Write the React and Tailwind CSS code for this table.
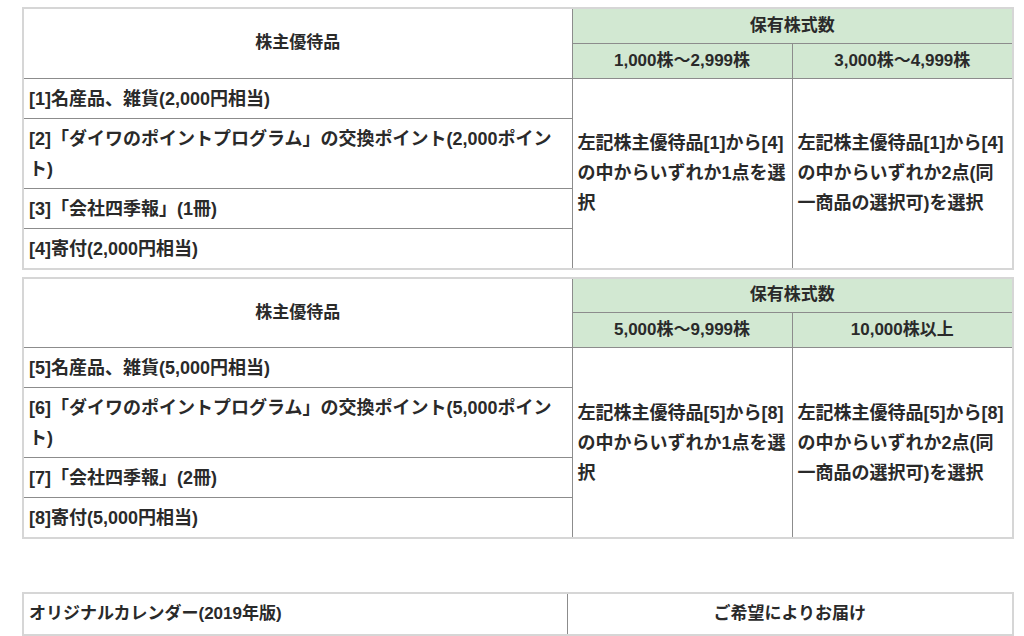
import React from 'react';

const font = { fontFamily: '"Liberation Sans", "Noto Sans CJK JP", sans-serif' };

const tables = [
  {
    cols: ['1,000株～2,999株', '3,000株～4,999株'],
    items: [
      '[1]名産品、雑貨(2,000円相当)',
      '[2]「ダイワのポイントプログラム」の交換ポイント(2,000ポイント)',
      '[3]「会社四季報」(1冊)',
      '[4]寄付(2,000円相当)',
    ],
    one: '左記株主優待品[1]から[4]の中からいずれか1点を選択',
    two: '左記株主優待品[1]から[4]の中からいずれか2点(同一商品の選択可)を選択',
  },
  {
    cols: ['5,000株～9,999株', '10,000株以上'],
    items: [
      '[5]名産品、雑貨(5,000円相当)',
      '[6]「ダイワのポイントプログラム」の交換ポイント(5,000ポイント)',
      '[7]「会社四季報」(2冊)',
      '[8]寄付(5,000円相当)',
    ],
    one: '左記株主優待品[5]から[8]の中からいずれか1点を選択',
    two: '左記株主優待品[5]から[8]の中からいずれか2点(同一商品の選択可)を選択',
  },
];

function BenefitTable({ t }) {
  return (
    <table className="w-[990px] table-fixed border-2 border-[#d6d6d6] text-[18px] font-bold leading-[30px] text-[#2a2a2a]">
      <colgroup>
        <col className="w-[549px]" />
        <col className="w-[220px]" />
        <col className="w-[221px]" />
      </colgroup>
      <tbody>
        <tr className="h-[35px]">
          <th rowSpan={2} className="border border-[#8c8c8c] text-center text-[17px] font-bold">
            株主優待品
          </th>
          <th colSpan={2} className="border border-[#8c8c8c] bg-[#d2e8d2] text-center text-[17px] font-bold">
            保有株式数
          </th>
        </tr>
        <tr className="h-[35px]">
          {t.cols.map((c) => (
            <th key={c} className="border border-[#8c8c8c] bg-[#d2e8d2] text-center text-[17px] font-bold">
              {c}
            </th>
          ))}
        </tr>
        {t.items.map((item, i) => (
          <tr key={i}>
            <td className="border border-[#8c8c8c] px-[5px] pt-[5px] pb-[4px] align-middle">{item}</td>
            {i === 0 && (
              <>
                <td rowSpan={4} className="border border-[#8c8c8c] px-[5px] align-middle">
                  {t.one}
                </td>
                <td rowSpan={4} className="border border-[#8c8c8c] px-[5px] align-middle">
                  {t.two}
                </td>
              </>
            )}
          </tr>
        ))}
      </tbody>
    </table>
  );
}

export default function App() {
  return (
    <div className="min-h-screen bg-white pt-[7px] pl-[22px]" style={font}>
      <div className="flex flex-col gap-[7px]">
        {tables.map((t, i) => (
          <BenefitTable key={i} t={t} />
        ))}
      </div>
      <table className="mt-[53px] w-[990px] table-fixed border-2 border-[#d6d6d6] text-[17px] font-bold leading-[30px] text-[#2a2a2a]">
        <colgroup>
          <col className="w-[544px]" />
          <col className="w-[446px]" />
        </colgroup>
        <tbody>
          <tr className="h-[42px]">
            <td className="border border-[#8c8c8c] px-[5px]">オリジナルカレンダー(2019年版)</td>
            <td className="border border-[#8c8c8c] px-[5px] text-center">ご希望によりお届け</td>
          </tr>
        </tbody>
      </table>
    </div>
  );
}
